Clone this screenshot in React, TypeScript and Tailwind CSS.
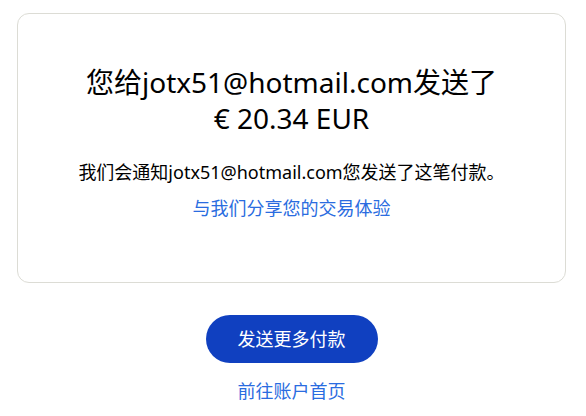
import React from 'react';

export default function App() {
  return (
    <div
      className="min-h-screen bg-white pt-[13px] pl-[17px] pr-[20px] text-[#000000]"
      style={{ fontFamily: '"Noto Sans", "Noto Sans CJK SC", sans-serif' }}
    >
      <section className="rounded-[12px] border border-[#dcdcd5] pt-[50px] pb-[60px] px-4 text-center">
        <h1 className="text-[28px] leading-[36px] font-normal">
          您给jotx51@hotmail.com发送了
          <br />
          € 20.34 EUR
        </h1>
        <p className="mt-[23px] text-[18px] leading-[27px]">
          我们会通知jotx51@hotmail.com您发送了这笔付款。
        </p>
        <a href="#" className="mt-[9px] block text-[18px] leading-[27px] text-[#2a6ce0]">
          与我们分享您的交易体验
        </a>
      </section>

      <div className="flex flex-col items-center">
        <button className="mt-[32px] h-[48px] w-[172px] rounded-full bg-[#1040c0] text-[18px] text-white">
          发送更多付款
        </button>
        <a href="#" className="mt-[15px] text-[18px] leading-[27px] text-[#2a6ce0]">
          前往账户首页
        </a>
      </div>
    </div>
  );
}
